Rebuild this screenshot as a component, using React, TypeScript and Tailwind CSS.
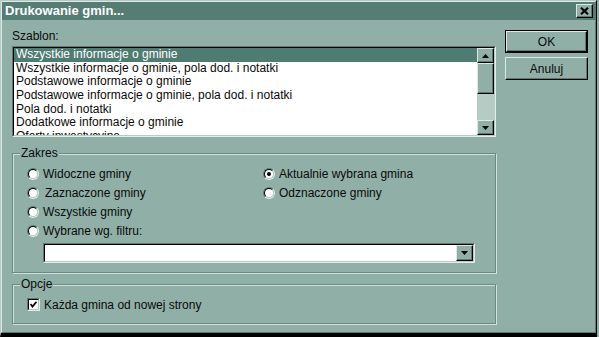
import React from 'react';

const FACE = 'bg-[#90b0a7]';

const templates = [
  'Wszystkie informacje o gminie',
  'Wszystkie informacje o gminie, pola dod. i notatki',
  'Podstawowe informacje o gminie',
  'Podstawowe informacje o gminie, pola dod. i notatki',
  'Pola dod. i notatki',
  'Dodatkowe informacje o gminie',
  'Oferty inwestycyjne',
];

function Arrow({ down }: { down?: boolean }) {
  return (
    <svg width="7" height="4" viewBox="0 0 7 4">
      <polygon points={down ? '0,0 7,0 3.5,4' : '0,4 7,4 3.5,0'} fill="#000" />
    </svg>
  );
}

function Raised({ className, children }: { className?: string; children?: React.ReactNode }) {
  return (
    <div
      className={`flex items-center justify-center border border-t-[#dbe9e4] border-l-[#dbe9e4] border-r-black border-b-black shadow-[inset_-1px_-1px_0_#5d7a72] ${FACE} ${className ?? ''}`}>
      {children}
    </div>
  );
}

function Radio({ label, checked, className }: { label: string; checked?: boolean; className?: string }) {
  return (
    <div className={`flex h-[19px] items-center ${className ?? ''}`}>
      <div className="w-[12px] h-[12px] rounded-full border border-t-[#5d7a72] border-l-[#5d7a72] border-r-[#e2eeea] border-b-[#e2eeea]">
        <div className="w-full h-full rounded-full border border-t-black border-l-black border-r-[#b6ccc4] border-b-[#b6ccc4] bg-white flex items-center justify-center">
          {checked && <div className="w-[4px] h-[4px] rounded-full bg-black" />}
        </div>
      </div>
      <span className="ml-[4px]">{label}</span>
    </div>
  );
}

function Group({ title, className, children }: { title: string; className?: string; children: React.ReactNode }) {
  return (
    <div
      className={`relative border border-[#6a8980] shadow-[inset_1px_1px_0_#d0e1db,1px_1px_0_#d0e1db] ${className ?? ''}`}>
      <span className={`absolute -top-[7px] left-[7px] px-[1px] leading-[13px] ${FACE}`}>{title}</span>
      {children}
    </div>
  );
}

export default function App() {
  return (
    <div className={`w-[599px] h-[337px] ${FACE} font-['Liberation_Sans',Arial,sans-serif] text-[12px] text-[#0a0a0a]`}>
      <div className="w-[597px] h-[337px] border border-t-[#b2cac2] border-l-[#b2cac2] border-r-black border-b-[4px] border-b-black">
        <div className="h-full border border-t-[#dcebe6] border-l-[#dcebe6] border-r-[#5d7a72] border-b-[#5d7a72] flex flex-col">
          {/* title bar */}
          <div className="h-[18px] bg-[#557d74] flex items-center justify-between pl-[3px] pr-[2px]">
            <span className="text-white font-bold text-[13px] leading-[18px]">Drukowanie gmin...</span>
            <Raised className="w-[17px] h-[14px]">
              <svg width="9" height="8" viewBox="0 0 9 8">
                <path d="M1 0.8 L8 7.2 M8 0.8 L1 7.2" stroke="#000" strokeWidth="2.2" />
              </svg>
            </Raised>
          </div>

          <div className="flex pl-[10px] pr-[7px] pt-[10px]">
            {/* left column */}
            <div className="w-[484px] flex flex-col">
              <div className="h-[13px] leading-[13px]">Szablon:</div>
              <div className="mt-[3px] h-[91px] border border-t-[#5d7a72] border-l-[#5d7a72] border-r-[#e2eeea] border-b-[#e2eeea]">
                <div className="h-full flex border border-t-black border-l-black border-r-[#b6ccc4] border-b-[#b6ccc4] bg-white">
                  <div className="flex-1 overflow-hidden">
                    {templates.map((t, i) => (
                      <div
                        key={t}
                        className={`h-[13.67px] leading-[13px] pl-[2px] whitespace-nowrap ${
                          i === 0 ? 'bg-[#4f7c72] text-white' : ''
                        }`}>
                        {t}
                      </div>
                    ))}
                  </div>
                  <div className="w-[17px] flex flex-col bg-[#b5cbc3]">
                    <Raised className="h-[15px]">
                      <Arrow />
                    </Raised>
                    <Raised className="h-[31px]" />
                    <div className="flex-1" />
                    <Raised className="h-[15px]">
                      <Arrow down />
                    </Raised>
                  </div>
                </div>
              </div>

              <Group title="Zakres" className="mt-[16px] h-[120px] pt-[10px] pl-[14px]">
                <div className="flex">
                  <div className="w-[236px] flex flex-col">
                    <Radio label="Widoczne gminy" />
                    <Radio label="Zaznaczone gminy" className="[&>span]:ml-[6px]" />
                    <Radio label="Wszystkie gminy" />
                    <Radio label="Wybrane wg. filtru:" />
                  </div>
                  <div className="flex flex-col">
                    <Radio label="Aktualnie wybrana gmina" checked />
                    <Radio label="Odznaczone gminy" />
                  </div>
                </div>
                <div className="mt-[3px] ml-[16px] w-[432px] h-[20px] border border-t-[#5d7a72] border-l-[#5d7a72] border-r-[#e2eeea] border-b-[#e2eeea]">
                  <div className="h-full flex justify-end border border-t-black border-l-black border-r-[#b6ccc4] border-b-[#b6ccc4] bg-white">
                    <Raised className="w-[17px] h-full">
                      <Arrow down />
                    </Raised>
                  </div>
                </div>
              </Group>

              <Group title="Opcje" className="mt-[11px] h-[40px] pt-[13px] pl-[14px]">
                <div className="flex items-center h-[13px]">
                  <div className="w-[13px] h-[13px] border border-t-[#5d7a72] border-l-[#5d7a72] border-r-[#e2eeea] border-b-[#e2eeea]">
                    <div className="w-full h-full border border-t-black border-l-black border-r-[#b6ccc4] border-b-[#b6ccc4] bg-white flex items-center justify-center">
                      <svg width="7" height="7" viewBox="0 0 7 7">
                        <polyline points="0.5,3 2.5,5.5 6.5,0.8" fill="none" stroke="#000" strokeWidth="1.8" />
                      </svg>
                    </div>
                  </div>
                  <span className="ml-[4px]">Każda gmina od nowej strony</span>
                </div>
              </Group>
            </div>

            {/* right column */}
            <div className="ml-[9px] w-[83px] flex flex-col">
              <div className="h-[23px] border border-black">
                <Raised className="h-full">OK</Raised>
              </div>
              <Raised className="mt-[4px] h-[23px]">Anuluj</Raised>
            </div>
          </div>
        </div>
      </div>
    </div>
  );
}
